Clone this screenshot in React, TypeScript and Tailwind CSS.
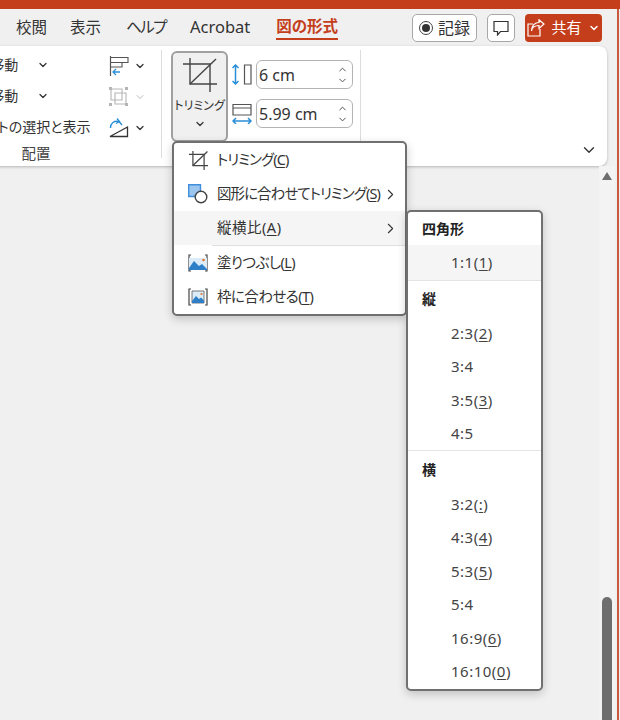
import { ChevronDown, ChevronRight, ChevronUp } from "lucide-react";
import type { ReactNode } from "react";

const font = '[font-family:"Noto_Sans","Noto_Sans_CJK_JP",sans-serif] [font-feature-settings:"palt"]';

function CropIcon({ size }: { size: number }) {
  return (
    <svg width={size} height={size} viewBox="0 0 34 34" fill="none" stroke="#444" strokeWidth={size > 24 ? 1.4 : 2.2}>
      <path d="M7 0V26H34" />
      <path d="M0 6H27V34" />
      <path d="M7 26L33 1" />
    </svg>
  );
}

function ShapeIcon() {
  return (
    <svg width="20" height="20" viewBox="0 0 20 20" fill="none">
      <path d="M0.700 0.700H12.500V7.500A7 7 0 0 0 7.500 12.500H0.700Z" fill="#9cc6ee" stroke="#3f8fdc" strokeWidth="1.400" />
      <circle cx="13" cy="13" r="5.800" fill="#fff" stroke="#444" strokeWidth="1.400" />
    </svg>
  );
}

function FillIcon() {
  return (
    <svg width="20" height="18" viewBox="0 0 20 18" fill="none">
      <path d="M3 1H1V17H3M17 1H19V17H17" stroke="#444" strokeWidth="1.200" />
      <path d="M1 4H19V16H1Z" fill="#dcebf8" />
      <path d="M1 14L6 7L11 12L14 10L19 15V16H1Z" fill="#2f7fc8" />
      <circle cx="15.500" cy="6" r="1.300" fill="#e8742a" />
    </svg>
  );
}

function FitIcon() {
  return (
    <svg width="20" height="18" viewBox="0 0 20 18" fill="none">
      <path d="M3 1H1V17H3M17 1H19V17H17" stroke="#444" strokeWidth="1.200" />
      <path d="M4 3H16V15H4Z" fill="#dcebf8" stroke="#555" strokeWidth="0.800" />
      <path d="M4 13L8 8L11 11L13 9.500L16 12.500V15H4Z" fill="#2f7fc8" />
      <circle cx="13.500" cy="6" r="1.100" fill="#e8742a" />
    </svg>
  );
}

function AlignIcon() {
  return (
    <svg width="20" height="20" viewBox="0 0 20 20" fill="none">
      <path d="M1.500 0V20" stroke="#555" strokeWidth="1.200" />
      <path d="M2 1.500H19V6.500H2M2 6.500H13V11H2" stroke="#555" strokeWidth="1.100" />
      <path d="M11 16H4M7 13L4 16L7 19" stroke="#2b8fd8" strokeWidth="1.300" />
    </svg>
  );
}

function GroupIcon() {
  return (
    <svg width="20" height="20" viewBox="0 0 20 20" fill="none" stroke="#b5b5b5" strokeWidth="1.100">
      <path d="M2 2H13V13H2ZM6 6H17V17H6Z" />
      <path d="M0 0H3V3H0ZM16 0H19V3H16ZM0 16H3V19H0ZM16 16H19V19H16Z" fill="#b5b5b5" stroke="none" />
    </svg>
  );
}

function RotateIcon() {
  return (
    <svg width="20" height="20" viewBox="0 0 20 20" fill="none">
      <path d="M1.500 10C1.500 5 5 2.500 10 3.500L13 7" stroke="#2b8fd8" strokeWidth="1.400" />
      <path d="M8 0.500L10.500 3.500L7 5.500" stroke="#2b8fd8" strokeWidth="1.300" />
      <path d="M1 18.500L18.500 9V18.500Z" stroke="#333" strokeWidth="1.300" />
    </svg>
  );
}

function HeightIcon() {
  return (
    <svg width="20" height="21" viewBox="0 0 20 21" fill="none">
      <path d="M3.500 1V20M0.500 4L3.500 1L6.500 4M0.500 17L3.500 20L6.500 17" stroke="#2b8fd8" strokeWidth="1.500" />
      <path d="M12.500 1H19V20H12.500Z" stroke="#555" strokeWidth="1.200" />
    </svg>
  );
}

function WidthIcon() {
  return (
    <svg width="20" height="21" viewBox="0 0 20 21" fill="none">
      <path d="M1 1.500H19V12H1ZM1 5H19" stroke="#555" strokeWidth="1.200" />
      <path d="M1 18H19M4 15L1 18L4 21M16 15L19 18L16 21" stroke="#2b8fd8" strokeWidth="1.500" />
    </svg>
  );
}

function ShareIcon() {
  return (
    <svg width="18" height="18" viewBox="0 0 18 18" fill="none" stroke="#fff" strokeWidth="1.200">
      <path d="M6 5H1V17H13V10" />
      <path d="M4.500 12C5 8 8 6.500 12 6.500V9.500L17 5L12 0.800V3.500C8 3.500 4.500 6.500 4.500 12Z" />
    </svg>
  );
}

function CommentIcon() {
  return (
    <svg width="16" height="16" viewBox="0 0 16 16" fill="none" stroke="#333" strokeWidth="1.200">
      <path d="M1 1.500H15V11.500H7.500L4.500 15V11.500H1Z" />
    </svg>
  );
}

function Key({ children }: { children: ReactNode }) {
  return <span className="underline underline-offset-2">{children}</span>;
}

function ArrangeRow({ label, pad }: { label: string; pad: string }) {
  return (
    <div className={`flex h-[31px] items-center pb-[2px] ${pad}`}>
      <span className="text-[14px] whitespace-nowrap text-[#333]">{label}</span>
    </div>
  );
}

function SizeField({ value }: { value: string }) {
  return (
    <div className="flex h-[29px] w-[97px] items-center justify-between rounded-[6px] border border-[#b4b4b4] bg-white pr-[4px] pl-[2px]">
      <span className="text-[16px] text-[#333]">{value}</span>
      <div className="flex flex-col text-[#444]">
        <ChevronUp size={11} strokeWidth={2} />
        <ChevronDown size={11} strokeWidth={2} />
      </div>
    </div>
  );
}

function MenuRow({ icon, children, arrow, active, spacing }: { icon?: ReactNode; children: ReactNode; arrow?: boolean; active?: boolean; spacing: string }) {
  return (
    <div className={`flex h-[34px] items-center text-[14.500px] text-[#333] ${active ? "bg-[#f5f5f5]" : ""}`}>
      <div className="flex w-[43px] shrink-0 justify-end pr-[9px]">{icon}</div>
      <span className={`whitespace-nowrap ${spacing}`}>{children}</span>
      {arrow && <ChevronRight size={17} strokeWidth={1.500} className="mr-[6px] ml-auto shrink-0 text-[#333]" />}
    </div>
  );
}

function RatioRow({ children }: { children: ReactNode }) {
  return (
    <div className="flex h-[33.5px] items-center pl-[43px] text-[15px] tracking-[0.5px] text-[#444]">
      {children}
    </div>
  );
}

function RatioHeader({ children, height }: { children: ReactNode; height: string }) {
  return <div className={`flex items-center pl-[14px] text-[14px] font-bold text-[#222] ${height}`}>{children}</div>;
}

export default function App() {
  return (
    <div className={`relative flex h-[720px] w-[620px] flex-col overflow-hidden border-t-[9px] border-t-[#c43e1c] bg-[#f0f0f0] ${font}`}>
      <div className="flex h-[37px] shrink-0 items-center pr-[18px] text-[15.500px] text-[#333]">
        <span className="ml-[16px]">校閲</span>
        <span className="ml-[23px]">表示</span>
        <span className="ml-[25px] tracking-[-1.500px]">ヘルプ</span>
        <span className="ml-[24px] text-[16.500px]">Acrobat</span>
        <span className="ml-[26px] border-b-2 border-[#c43e1c] font-bold text-[#c43e1c]">図の形式</span>
        <div className="ml-auto flex h-[28px] w-[65px] items-center justify-center gap-[5px] rounded-[5px] border border-[#a8a8a8] bg-white">
          <span className="flex h-[14px] w-[14px] items-center justify-center rounded-full border border-[#444]">
            <span className="h-[8px] w-[8px] rounded-full bg-[#333]" />
          </span>
          <span className="text-[16px]">記録</span>
        </div>
        <div className="ml-[10px] flex h-[28px] w-[28px] items-center justify-center rounded-[5px] border border-[#a8a8a8] bg-white">
          <CommentIcon />
        </div>
        <div className="ml-[10px] flex h-[28px] w-[77px] items-center justify-center gap-[6px] rounded-[4px] bg-[#c43e1c] text-white">
          <ShareIcon />
          <span className="text-[15px]">共有</span>
          <ChevronDown size={12} strokeWidth={3} />
        </div>
      </div>

      <div className="-ml-[78px] flex h-[120px] w-[685px] shrink-0 rounded-[8px] bg-white pt-[4px] shadow-[0_1px_3px_rgba(0,0,0,0.25)]">
        <div className="flex h-[108px] w-[240px] shrink-0 flex-col border-r border-[#dcdcdc]">
          <div className="flex">
            <div className="flex w-[187px] shrink-0 flex-col">
              <div className="relative">
                <ArrangeRow label="前面へ移動" pad="pl-[26px]" />
                <ChevronDown size={12} strokeWidth={2.500} className="absolute top-[9px] left-[115px] text-[#333]" />
              </div>
              <div className="relative">
                <ArrangeRow label="背面へ移動" pad="pl-[26px]" />
                <ChevronDown size={12} strokeWidth={2.500} className="absolute top-[9px] left-[115px] text-[#333]" />
              </div>
              <ArrangeRow label="オブジェクトの選択と表示" pad="pl-[13px]" />
            </div>
            <div className="flex flex-col">
              <div className="flex h-[31px] items-center gap-[5px]">
                <AlignIcon />
                <ChevronDown size={12} strokeWidth={2.500} className="text-[#333]" />
              </div>
              <div className="flex h-[31px] items-center gap-[5px]">
                <GroupIcon />
                <ChevronDown size={12} strokeWidth={2} className="text-[#bbb]" />
              </div>
              <div className="flex h-[31px] items-center gap-[5px]">
                <RotateIcon />
                <ChevronDown size={12} strokeWidth={2.500} className="text-[#333]" />
              </div>
            </div>
          </div>
          <div className="w-[228px] text-center text-[14.500px] text-[#444]">配置</div>
        </div>

        <div className="mt-[1px] ml-[9px] flex h-[91px] w-[57px] shrink-0 flex-col items-center rounded-[6px] border-2 border-[#a0a0a0] bg-[#f0f0f0] pt-[5px]">
          <CropIcon size={34} />
          <span className="mt-[5px] text-[12px] leading-[18px] whitespace-nowrap text-[#333]">トリミング</span>
          <ChevronDown size={12} strokeWidth={2.500} className="mt-[3px] text-[#333]" />
        </div>

        <div className="ml-[4px] flex h-[108px] w-[129px] shrink-0 flex-col gap-[10px] border-r border-[#dcdcdc] pt-[10px]">
          <div className="flex items-center gap-[4px]">
            <HeightIcon />
            <SizeField value="6 cm" />
          </div>
          <div className="flex items-center gap-[4px]">
            <WidthIcon />
            <SizeField value="5.99 cm" />
          </div>
        </div>

        <div className="flex flex-1 items-end justify-end pr-[9px] pb-[7px]">
          <ChevronDown size={18} strokeWidth={1.800} className="text-[#333]" />
        </div>
      </div>

      <div className="flex flex-1 justify-end pr-[5px]">
        <div className="flex w-[16px] flex-col items-center bg-[#f3f3f3] pt-[6px]">
          <div className="h-0 w-0 border-x-[5px] border-b-[8px] border-x-transparent border-b-[#6e6e6e]" />
          <div className="mt-auto h-[123px] w-[10px] rounded-t-[5px] bg-[#6e6e6e]" />
        </div>
      </div>

      <div className="absolute top-0 right-[1px] bottom-0 w-[2px] bg-[#c9593c]" />

      <div className="absolute top-[132px] left-[172px] w-[235px] rounded-[5px] border-2 border-[#707070] bg-white shadow-[0_3px_10px_rgba(0,0,0,0.2)]">
        <MenuRow icon={<CropIcon size={19} />} spacing="tracking-[-0.950px]">トリミング(<Key>C</Key>)</MenuRow>
        <MenuRow icon={<ShapeIcon />} arrow spacing="tracking-[-0.950px]">図形に合わせてトリミング(<Key>S</Key>)</MenuRow>
        <MenuRow arrow active spacing="tracking-[0.500px]">縦横比(<Key>A</Key>)</MenuRow>
        <div className="ml-[38px] h-px bg-[#e0e0e0]" />
        <MenuRow icon={<FillIcon />} spacing="tracking-[-0.600px]">塗りつぶし(<Key>L</Key>)</MenuRow>
        <MenuRow icon={<FitIcon />} spacing="tracking-[-0.550px]">枠に合わせる(<Key>T</Key>)</MenuRow>
      </div>

      <div className="absolute top-[201px] left-[406px] w-[137px] rounded-[5px] border-2 border-[#707070] bg-white pb-[1px] shadow-[0_3px_10px_rgba(0,0,0,0.2)]">
        <RatioHeader height="h-[33px] pb-[1px]">四角形</RatioHeader>
        <div className="flex h-[35px] items-center bg-[#f5f5f5] pl-[43px] text-[15px] tracking-[0.5px] text-[#444]">1:1(<Key>1</Key>)</div>
        <div className="h-px bg-[#e4e4e4]" />
        <RatioHeader height="h-[35px]">縦</RatioHeader>
        <RatioRow>2:3(<Key>2</Key>)</RatioRow>
        <RatioRow>3:4</RatioRow>
        <RatioRow>3:5(<Key>3</Key>)</RatioRow>
        <RatioRow>4:5</RatioRow>
        <div className="h-px bg-[#e4e4e4]" />
        <RatioHeader height="h-[36px]">横</RatioHeader>
        <RatioRow>3:2(<Key>:</Key>)</RatioRow>
        <RatioRow>4:3(<Key>4</Key>)</RatioRow>
        <RatioRow>5:3(<Key>5</Key>)</RatioRow>
        <RatioRow>5:4</RatioRow>
        <RatioRow>16:9(<Key>6</Key>)</RatioRow>
        <RatioRow>16:10(<Key>0</Key>)</RatioRow>
      </div>
    </div>
  );
}
